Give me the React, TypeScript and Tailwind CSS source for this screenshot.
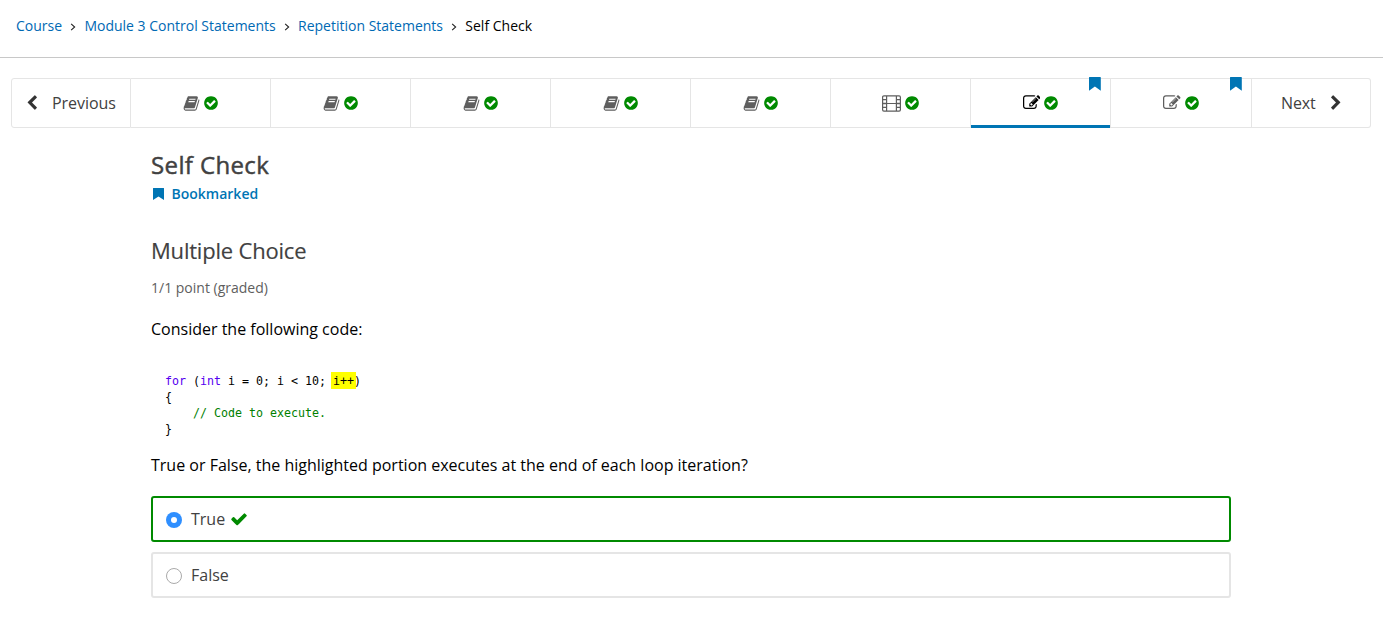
import type { ReactNode } from "react";

const paths = {
  book: "M1703 478q40 57 18 129l-275 906q-19 64-76.5 107.5t-122.5 43.5h-923q-77 0-148.5-53.5t-99.5-131.5q-24-67-2-127 0-4 3-27t4-37q1-8-3-21.5t-3-19.5q2-11 8-21t16.5-23.5 16.5-23.5q23-38 45-91.5t30-91.5q3-10 .5-30t-.5-28q3-11 17-28t17-23q21-36 42-92t25-90q1-9-2.5-32t.5-28q4-13 22-30.5t22-22.5q19-26 42.5-84.5t27.5-96.5q1-8-3-25.5t-2-26.5q2-8 9-18t18-23 17-21q8-12 16.5-30.5t15-35 16-36 19.5-32 26.5-23.5 36-11.5 47.5 5.5l-1 3q38-9 51-9h761q74 0 114 56t18 130l-274 906q-36 119-71.5 153.5t-128.5 34.5h-869q-27 0-38 15-11 16-1 43 24 70 144 70h923q29 0 56-15.5t35-41.5l300-987q7-22 5-57 38 15 59 43zm-1064 2q-4 13 2 22.5t20 9.5h608q13 0 25.5-9.5t16.5-22.5l21-64q4-13-2-22.5t-20-9.5h-608q-13 0-25.5 9.5t-16.5 22.5zm-83 256q-4 13 2 22.5t20 9.5h608q13 0 25.5-9.5t16.5-22.5l21-64q4-13-2-22.5t-20-9.5h-608q-13 0-25.5 9.5t-16.5 22.5z",
  edit: "M888 1184l116-116-152-152-116 116v56h96v96h56zm440-720q-16-16-33 1l-350 350q-17 17-1 33t33-1l350-350q17-17 1-33zm80 594v190q0 119-84.5 203.5t-203.5 84.5h-832q-119 0-203.5-84.5t-84.5-203.5v-832q0-119 84.5-203.5t203.5-84.5h832q63 0 117 25 15 7 18 23 3 17-9 29l-49 49q-14 14-32 8-23-6-45-6h-832q-66 0-113 47t-47 113v832q0 66 47 113t113 47h832q66 0 113-47t47-113v-126q0-13 9-22l64-64q15-15 35-7t20 29zm-96-738l288 288-672 672h-288v-288zm444 132l-92 92-288-288 92-92q28-28 68-28t68 28l152 152q28 28 28 68t-28 68z",
  checkCircle: "M1412 734q0-28-18-46l-91-90q-19-19-45-19t-45 19l-408 407-226-226q-19-19-45-19t-45 19l-91 90q-18 18-18 46 0 27 18 45l362 362q19 19 45 19 27 0 46-19l543-543q18-18 18-45zm252 162q0 209-103 385.5t-279.5 279.5-385.5 103-385.5-103-279.5-279.5-103-385.5 103-385.5 279.5-279.5 385.5-103 385.5 103 279.5 279.5 103 385.5z",
  check: "M1671 566q0 40-28 68l-724 724-136 136q-28 28-68 28t-68-28l-136-136-362-362q-28-28-28-68t28-68l136-136q28-28 68-28t68 28l294 295 656-657q28-28 68-28t68 28l136 136q28 28 28 68z",
  chevron: "M1427 301l-531 531 531 531q19 19 19 45t-19 45l-166 166q-19 19-45 19t-45-19l-742-742q-19-19-19-45t19-45l742-742q19-19 45-19t45 19l166 166q19 19 19 45t-19 45z",
};

function Glyph({ name, className }: { name: keyof typeof paths; className: string }) {
  return (
    <svg viewBox="0 0 1792 1792" fill="currentColor" className={`block shrink-0 ${className}`}>
      <path d={paths[name]} />
    </svg>
  );
}

function Film() {
  return (
    <svg viewBox="0 0 19 17" className="block h-[17px] w-[19px] shrink-0" fill="none" stroke="currentColor">
      <rect x="0.6" y="0.9" width="17.8" height="15.2" rx="1.3" strokeWidth="1.2" />
      <path d="M4.6 1v15M14.4 1v15M4.6 8.5h9.8" strokeWidth="1.2" />
      <path d="M1 4.6h3.6M1 8.5h3.6M1 12.4h3.6M14.4 4.6H18M14.4 8.5H18M14.4 12.4H18" strokeWidth="1.3" />
    </svg>
  );
}

function Bookmark({ className }: { className: string }) {
  return (
    <svg viewBox="0 0 12 14" preserveAspectRatio="none" fill="#0075b4" className={className}>
      <path d="M.4 0h11.2q.4 0 .4.4V14L6 9.8 0 14V.4Q0 0 .4 0z" />
    </svg>
  );
}

function Unit({ children, active, marked, wide }: { children: ReactNode; active?: boolean; marked?: boolean; wide?: boolean }) {
  return (
    <div
      className={`relative flex h-[50px] shrink-0 items-center justify-center border-y border-r border-[#e5e5e5] ${
        wide ? "w-[141px]" : "w-[140px]"
      } ${active ? "text-black" : "text-[#5e5e5e]"}`}
    >
      {children}
      <Glyph name="checkCircle" className="ml-[3px] size-4 text-[#008a00]" />
      {marked && <Bookmark className="absolute -top-[1.6px] right-[9.3px] h-[13.7px] w-[11.8px]" />}
      {active && <span className="absolute inset-x-0 -bottom-px h-[3px] bg-[#0075b4]" />}
    </div>
  );
}

const crumbs = ["Course", "Module 3 Control Statements", "Repetition Statements"];

export default function App() {
  return (
    <div className="h-[631px] w-[1383px] overflow-hidden bg-white font-['Open_Sans',sans-serif] text-black">
      <header className="flex h-[58px] items-start border-b border-[#c8c8c8] pt-4 pl-4 text-[14px] leading-5">
        {crumbs.map((c) => (
          <span key={c} className="flex">
            <a className="text-[#0069b4]">{c}</a>
            <svg viewBox="0 0 6 8" className="mx-[8px] mt-[7px] h-2 w-[6.3px]" fill="none" stroke="#222" strokeWidth="1.1">
              <path d="M1 .8 4.5 4 1 7.2" />
            </svg>
          </span>
        ))}
        <span>Self Check</span>
      </header>

      <nav className="mt-5 ml-[11px] flex w-[1360px] text-[16px] text-[#414141]">
        <div className="flex h-[50px] w-[120px] shrink-0 items-center rounded-l-[3px] border border-[#e5e5e5] pl-3">
          <Glyph name="chevron" className="size-4 text-[#333]" />
          <span className="ml-3 tracking-[-0.05px]">Previous</span>
        </div>
        {[0, 1, 2, 3, 4].map((i) => (
          <Unit key={i}>
            <Glyph name="book" className="size-[17px]" />
          </Unit>
        ))}
        <Unit>
          <Film />
        </Unit>
        <Unit active marked>
          <Glyph name="edit" className="ml-px size-[17.5px]" />
        </Unit>
        <Unit marked wide>
          <Glyph name="edit" className="ml-px size-[17.5px]" />
        </Unit>
        <div className="flex h-[50px] w-[119px] shrink-0 items-center rounded-r-[3px] border border-l-0 border-[#e5e5e5] pl-[29px]">
          <span className="tracking-[-0.1px]">Next</span>
          <Glyph name="chevron" className="ml-3 size-4 -scale-x-100 text-[#333]" />
        </div>
      </nav>

      <main className="ml-[151px] w-[1080px] pt-[21px]">
        <h1 className="text-[24px] leading-8 tracking-[0.38px] text-[#414141] [-webkit-text-stroke:0.45px_#414141]">Self Check</h1>
        <div className="mt-[3px] flex h-5 items-center text-[14px] leading-5 font-semibold text-[#0075b4]">
          <Bookmark className="ml-[1.5px] h-3 w-[11px]" />
          <span className="ml-2">Bookmarked</span>
        </div>
        <h2 className="mt-[30px] text-[22px] leading-8 tracking-[-0.2px] text-[#414141] [-webkit-text-stroke:0.15px_#414141]">Multiple Choice</h2>
        <p className="mt-3 text-[14px] leading-5 text-[#5e5e5e]">1/1 point (graded)</p>
        <p className="mt-[19px] text-[16px] leading-6">Consider the following code:</p>
        <div className="mt-8 ml-[14px] font-['DejaVu_Sans_Mono',monospace] text-[11.63px] leading-4 whitespace-pre">
          <div className="flex">
            <span className="text-[#5500f0]">for</span>
            <span>{" ("}</span>
            <span className="text-[#5500f0]">int</span>
            <span>{" i = 0; i < 10; "}</span>
            <span className="-mx-0.5 -mt-px bg-[#ff0] px-0.5 pt-px">i++</span>
            <span>)</span>
          </div>
          <div>{"{"}</div>
          <div className="text-[#008000]">{"    // Code to execute."}</div>
          <div>{"}"}</div>
        </div>
        <p className="mt-4 text-[16px] leading-6">
          True or False, the highlighted portion executes at the end of each loop iteration?
        </p>
        <div className="mt-[19px] flex h-[46px] items-center rounded-[3px] border-2 border-[#008a00] pl-[13px] text-[16px] text-[#414141]">
          <span className="mt-0.5 flex size-4 items-center justify-center rounded-full bg-[#2f8fff]">
            <span className="size-1.5 rounded-full bg-white" />
          </span>
          <span className="ml-[9px]">True</span>
          <Glyph name="check" className="ml-[4.5px] size-[18px] text-[#008a00]" />
        </div>
        <div className="mt-[10px] flex h-[46px] items-center rounded-[3px] border-2 border-[#e5e5e5] pl-[13px] text-[16px] text-[#414141]">
          <span className="mt-0.5 size-4 rounded-full border border-[#aaa]" />
          <span className="ml-[9px]">False</span>
        </div>
      </main>
    </div>
  );
}
